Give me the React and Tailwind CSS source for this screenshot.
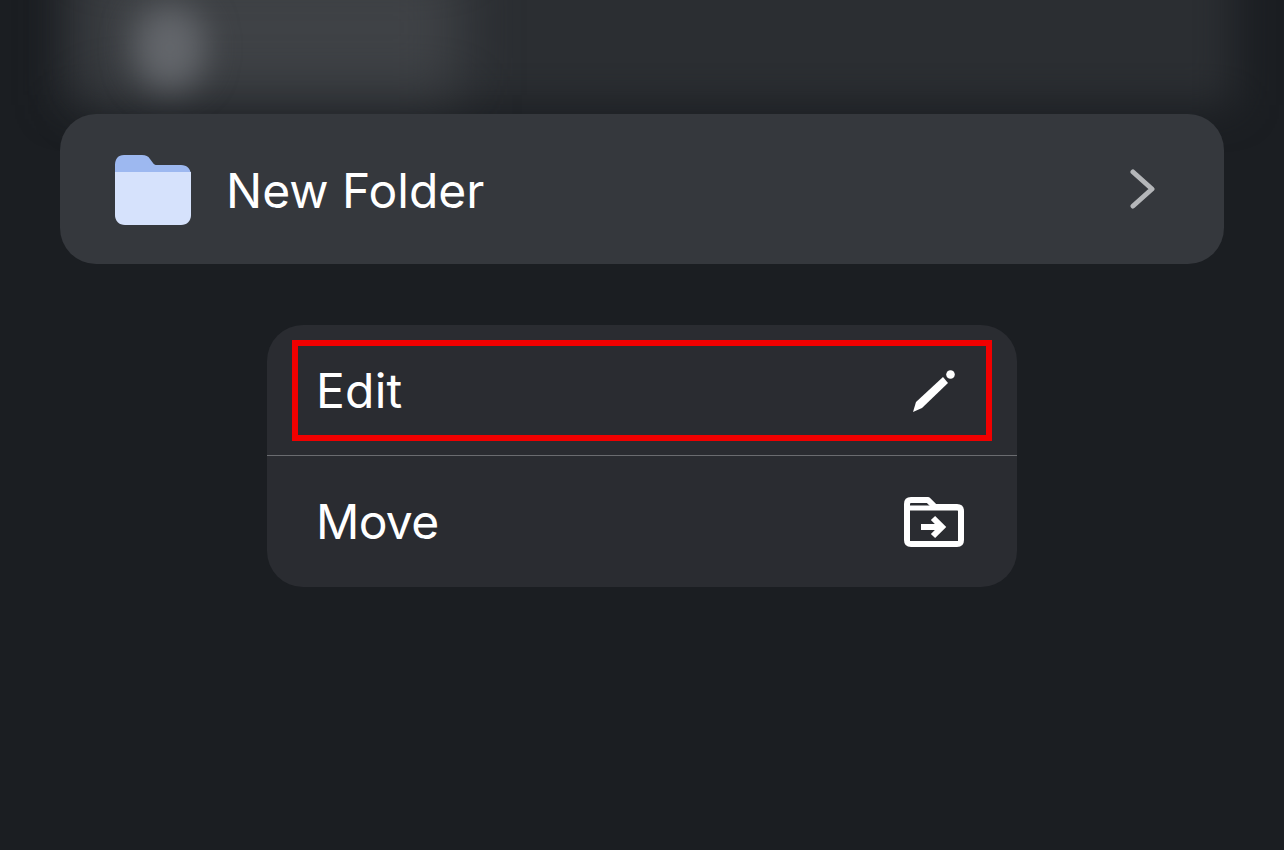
const FolderIcon = () => (
  <svg width="76" height="70" viewBox="0 0 76 70" className="mt-[2px] shrink-0">
    <path d="M0 10C0 4 3 0 9 0H27C31 0 33 1 35 4L38 8C39 9.500 40 10 42 10H66C72 10 76 14 76 20V30H0Z" fill="#9db8f0" />
    <path d="M0 17H76V60C76 66 72 70 66 70H10C4 70 0 66 0 60Z" fill="#d6e2fc" />
  </svg>
);

const PencilIcon = () => (
  <svg width="46" height="46" viewBox="0 0 46 46" className="shrink-0">
    <path d="M3 44L6 34L33 9L38 15L12 40Z" fill="#fff" />
    <circle cx="40.500" cy="6.500" r="4.300" fill="#fff" />
  </svg>
);

const MoveIcon = () => (
  <svg width="60" height="50" viewBox="0 0 60 50" fill="none" className="shrink-0">
    <path d="M3 42V7C3 4 4.500 3 7 3H24L31 10H53C56 10 57 11.500 57 14V43C57 46 56 47 53 47H7C4 47 3 46 3 43Z" stroke="#fff" strokeWidth="6" strokeLinejoin="round" />
    <path d="M4 11H56" stroke="#fff" strokeWidth="5" />
    <path d="M17 30H36" stroke="#fff" strokeWidth="6" />
    <path d="M29 21L38 30L29 39" stroke="#fff" strokeWidth="6" />
  </svg>
);

export default function App() {
  return (
    <div className="relative h-[850px] w-[1284px] overflow-hidden bg-[#1b1e22] font-['Inter','Liberation_Sans',sans-serif] text-white">
      {/* blurred page behind the context menu */}
      <div className="absolute left-[60px] right-[50px] top-[-60px] h-[165px] bg-[#2b2e32] blur-[20px]" />
      <div className="absolute left-[90px] top-[-40px] h-[135px] w-[370px] bg-[#3f4246] blur-[28px]" />
      <div className="absolute left-[135px] top-[5px] h-[85px] w-[70px] rounded-full bg-[#63666b] blur-[16px]" />

      <div className="relative flex flex-col items-center pt-[114px]">
        <div className="flex h-[150px] w-[1164px] items-center rounded-[36px] bg-[#35383d] pl-[55px] pr-[67px]">
          <FolderIcon />
          <span className="mt-[3px] ml-[35px] flex-1 text-[48px] leading-none font-[380] tracking-[0px]">New Folder</span>
          <svg width="28" height="40" viewBox="0 0 28 40" fill="none">
            <path d="M4 3L23 20L4 37" stroke="#b4b6b9" strokeWidth="5" strokeLinecap="round" strokeLinejoin="round" />
          </svg>
        </div>

        <div className="mt-[61px] flex h-[262px] w-[750px] flex-col rounded-[36px] bg-[#2a2c31]">
          <div className="px-[25px] pt-[15px] pb-[14px]">
            <div className="flex h-[101px] items-center justify-between border-[6px] border-[#f00000] pl-[18px] pr-[30px]">
              <span className="text-[48px] leading-none font-[380] tracking-[0.2px]">Edit</span>
              <PencilIcon />
            </div>
          </div>
          <div className="h-px bg-[#6a6c70]" />
          <div className="flex flex-1 items-center justify-between pl-[49px] pr-[53px]">
            <span className="text-[48px] leading-none font-[380] tracking-[-0.7px]">Move</span>
            <MoveIcon />
          </div>
        </div>
      </div>
    </div>
  );
}
